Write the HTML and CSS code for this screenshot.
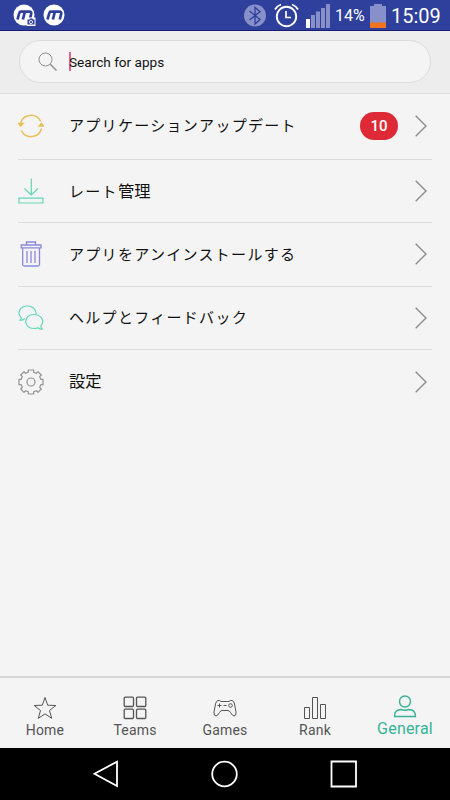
FILE: index.html
```html
<!DOCTYPE html>
<html lang="ja">
<head>
    <meta charset="UTF-8">
    <meta name="viewport" content="width=device-width, initial-scale=1.0">
    <title>General</title>
    <link rel="stylesheet" href="styles.css">
</head>
<body>
    <header class="status-bar">
        <svg class="logo" viewBox="0 0 23 23">
            <circle cx="11" cy="11" r="10.5" fill="#fff"/>
            <path d="M4.5 15.5 6.3 9Q6.6 7.7 8 7.7H16.5Q18.7 7.7 18.2 9.8L16.8 15.5M11.8 8 9.9 15.5" fill="none" stroke="#2e3f9c" stroke-width="2.7"/>
            <path d="M13.5 13.5H22.5V22H13.5z" fill="#fff"/>
            <path d="M14.5 15.5H16.5L17 14.5H19.5L20 15.5H21.5V20.5H14.5z" fill="#2e3f9c"/>
            <circle cx="18" cy="18" r="1.6" fill="none" stroke="#fff" stroke-width=".9"/>
        </svg>
        <svg class="logo" viewBox="0 0 23 23">
            <circle cx="11" cy="11" r="10.5" fill="#fff"/>
            <path d="M4.5 15.5 6.3 9Q6.6 7.7 8 7.7H16.5Q18.7 7.7 18.2 9.8L16.8 15.5M11.8 8 9.9 15.5" fill="none" stroke="#2e3f9c" stroke-width="2.7"/>
        </svg>
        <div class="status-right">
            <svg class="bluetooth" viewBox="0 0 22 23">
                <circle cx="11" cy="11.5" r="11" fill="#8790c8"/>
                <path d="M5.5 7 16 15.5 11 20V3.5L16 7.7 5.5 16" fill="none" stroke="#2e3f9c" stroke-width="1.3"/>
            </svg>
            <svg class="alarm" viewBox="0 0 25 25" fill="none" stroke="#fff">
                <circle cx="12.5" cy="13.5" r="9.7" stroke-width="1.9"/>
                <path d="M12 8V14.5H17" stroke-width="1.7"/>
                <path d="M1 6.5Q3 3 7 1.5M24 6.5Q22 3 18 1.5" stroke-width="1.8"/>
            </svg>
            <svg class="signal" viewBox="0 0 24 24" fill="#8790c8">
                <path d="M0 15H4V24H0z" fill="#fff"/>
                <path d="M5 11H9V24H5zM10 7.5H14V24H10zM15 4H19V24H15zM20 0H24V24H20z"/>
            </svg>
            <span class="percent">14%</span>
            <svg class="battery" viewBox="0 0 16 24">
                <path d="M0 2H4V0H12V2H16V19H0z" fill="#8790c8"/>
                <path d="M0 18.5H16V24H0z" fill="#f07320"/>
            </svg>
            <span class="clock">15:09</span>
        </div>
    </header>

    <div class="search-area">
        <div class="search-box">
            <svg class="search-icon" viewBox="0 0 20 20" fill="none" stroke="#929292">
                <circle cx="7.5" cy="7.5" r="6.5"/>
                <path d="M12.3 12.3 18.5 18.5" stroke-width="1.6"/>
            </svg>
            <span class="cursor"></span>
            <span class="placeholder">Search for apps</span>
        </div>
    </div>

    <main class="menu">
        <a class="row row-first">
            <svg class="row-icon yellow" viewBox="0 0 26 26">
                <path d="M2.5 10.5A10.8 10.8 0 0 1 22.7 8.5M23.5 15.5A10.8 10.8 0 0 1 3.3 17.5"/>
                <path d="M.8 10.5H5L2.6 13zM21.2 13 23.5 10.5 25.5 13z" fill="#e8c05c"/>
            </svg>
            <span class="label kana">アプリケーションアップデート</span>
            <span class="badge">10</span>
            <svg class="chevron" viewBox="0 0 12 22"><path d="M.7.7 11 11 .7 21.3"/></svg>
        </a>
        <a class="row">
            <svg class="row-icon green" viewBox="0 0 26 26">
                <path d="M13.3.5V17M6.5 10.5 13.3 17 20 10.5M1 20.2H25V25H1z"/>
            </svg>
            <span class="label"><span class="kana">レート</span>管理</span>
            <svg class="chevron" viewBox="0 0 12 22"><path d="M.7.7 11 11 .7 21.3"/></svg>
        </a>
        <a class="row">
            <svg class="row-icon purple" viewBox="0 0 26 26">
                <path d="M3.2 4H23V6.8H3.2zM8.5 4V1H17.5V4M4.7 6.8V23.5Q4.7 25 6.2 25H20Q21.5 25 21.5 23.5V6.8M9 10V22M13 10V22M17 10V22"/>
            </svg>
            <span class="label kana">アプリをアンインストールする</span>
            <svg class="chevron" viewBox="0 0 12 22"><path d="M.7.7 11 11 .7 21.3"/></svg>
        </a>
        <a class="row">
            <svg class="row-icon green" viewBox="0 0 26 26">
                <path d="M7 13.5Q4.5 15.5 2 15.2Q3.3 14 3 12.3C-1.5 7.5 2.5 1 9.5 1C14.5 1 18 4.5 18.3 9"/>
                <path d="M23 20.7C27.5 15.5 22.5 9.5 16 9.5C5 9.5 5 23.5 16 23.5Q18 23.5 20 22.7Q22 24.5 24.3 24.2Q22.8 22.5 23 20.7z"/>
            </svg>
            <span class="label kana">ヘルプとフィードバック</span>
            <svg class="chevron" viewBox="0 0 12 22"><path d="M.7.7 11 11 .7 21.3"/></svg>
        </a>
        <a class="row row-last">
            <svg class="row-icon gray" viewBox="0 0 26 26">
                <path d="M10.3 1H15.7V3.2L18.3 4.3 20 2.7 23.3 6 21.7 7.7 22.8 10.3H25V15.7H22.8L21.7 18.3 23.3 20 20 23.3 18.3 21.7 15.7 22.8V25H10.3V22.8L7.7 21.7 6 23.3 2.7 20 4.3 18.3 3.2 15.7H1V10.3H3.2L4.3 7.7 2.7 6 6 2.7 7.7 4.3 10.3 3.2z" stroke-linejoin="round"/>
                <circle cx="13" cy="13" r="4"/>
            </svg>
            <span class="label">設定</span>
            <svg class="chevron" viewBox="0 0 12 22"><path d="M.7.7 11 11 .7 21.3"/></svg>
        </a>
    </main>

    <nav class="tabs">
        <a class="tab">
            <svg viewBox="0 0 24 24"><path d="M12 1.5 14.7 9.2 22.8 9.5 16.5 14.5 18.7 22.3 12 17.9 5.3 22.3 7.5 14.5 1.2 9.5 9.3 9.2z"/></svg>
            <span>Home</span>
        </a>
        <a class="tab">
            <svg viewBox="0 0 24 24" stroke-width="1.3">
                <rect x="1.2" y="1.2" width="9.3" height="9.3" rx="1"/>
                <rect x="13.5" y="1.2" width="9.3" height="9.3" rx="1"/>
                <rect x="1.2" y="13.2" width="9.3" height="9.3" rx="1"/>
                <rect x="13.5" y="13.2" width="9.3" height="9.3" rx="1"/>
            </svg>
            <span>Teams</span>
        </a>
        <a class="tab">
            <svg viewBox="0 0 24 24">
                <path d="M8 5.5H16Q17 4 19 4.5Q21 5 21.5 8L23 16Q23.5 20 21 20Q19.5 20 17.5 16.500Q16.500 14.500 15 14.500H9Q7.500 14.500 6.500 16.500Q4.500 20 3 20Q.5 20 1 16L2.500 8Q3 5 5 4.500Q7 4 8 5.500z"/>
                <path d="M6.500 7.500V11.500M4.500 9.500H8.500M10.500 9.500H13.500"/>
                <circle cx="17.500" cy="9.500" r="1.800"/>
            </svg>
            <span>Games</span>
        </a>
        <a class="tab">
            <svg viewBox="0 0 24 24"><path d="M1.500 11.500H6.500V22.500H1.500zM9.500 1.500H14.500V22.500H9.500zM17.500 8.500H22.500V22.500H17.500z"/></svg>
            <span>Rank</span>
        </a>
        <a class="tab active">
            <svg viewBox="0 0 24 24">
                <circle cx="12" cy="6.500" r="5.500"/>
                <path d="M1.500 21.500Q1.500 14.500 8 14.500Q12 16 16 14.500Q22.500 14.500 22.500 21.500z"/>
            </svg>
            <span>General</span>
        </a>
    </nav>

    <footer class="nav-bar">
        <svg viewBox="0 0 28 28"><path d="M25 1.700V26L2.500 13.800z"/></svg>
        <svg viewBox="0 0 28 28"><circle cx="13.500" cy="14" r="12.300"/></svg>
        <svg viewBox="0 0 28 28"><path d="M1.500 1.500H26V26.500H1.500z"/></svg>
    </footer>
</body>
</html>
```

FILE: styles.css
```css
* {
    box-sizing: border-box;
}
body {
    margin: 0;
    width: 450px;
    height: 800px;
    display: flex;
    flex-direction: column;
    overflow: hidden;
    background-color: #f4f4f4;
    font-family: Roboto, "Noto Sans CJK JP", sans-serif;
    color: #111;
}
svg {
    display: block;
    flex: none;
}
.status-bar {
    height: 31px;
    display: flex;
    align-items: center;
    gap: 7px;
    padding: 1px 9px 0 13px;
    background-color: #2e3f9c;
    border-bottom: 1px solid #151c72;
    color: #fff;
}
.logo {
    width: 23px;
    height: 23px;
}
.status-right {
    display: flex;
    align-items: center;
    margin-left: auto;
}
.bluetooth {
    width: 22px;
    height: 23px;
}
.alarm {
    width: 25px;
    height: 25px;
    margin-left: 8px;
}
.signal {
    width: 24px;
    height: 24px;
    margin-left: 7px;
}
.percent {
    width: 30px;
    margin-left: 5px;
    font-size: 16px;
    white-space: nowrap;
}
.battery {
    width: 16px;
    height: 24px;
    margin-left: 5px;
}
.clock {
    width: 50px;
    margin-left: 5px;
    font-size: 20px;
}
.search-area {
    height: 63px;
    padding: 9px 19px 0;
    background-color: #ededed;
    border-bottom: 1px solid #dcdcdc;
}
.search-box {
    height: 43px;
    display: flex;
    align-items: center;
    padding-left: 18px;
    border: 1px solid #dcdcdc;
    border-radius: 22px;
    background-color: #f4f4f4;
}
.search-icon {
    width: 20px;
    height: 20px;
}
.cursor {
    width: 2px;
    height: 19px;
    margin-left: 11px;
    background-color: #e0668c;
}
.placeholder {
    margin-left: -2px;
    padding-top: 1px;
    font-size: 13.6px;
}
.menu {
    flex: 1;
    padding: 0 18px;
}
.row {
    height: 63.3px;
    display: flex;
    align-items: center;
    padding-right: 5px;
    border-bottom: 1px solid #dcdcdc;
}
.row-first {
    height: 66px;
    padding-bottom: 2px;
}
.row-last {
    border-bottom: 0;
}
.row-icon {
    width: 26px;
    height: 26px;
    fill: none;
}
.yellow {
    stroke: #e8c05c;
    stroke-width: 1.5;
}
.green {
    stroke: #62d8b5;
    stroke-width: 1.2;
}
.purple {
    stroke: #8b88d9;
    stroke-width: 1.3;
}
.gray {
    stroke: #929292;
    stroke-width: 1.2;
}
.label {
    margin-left: 25px;
    padding-top: 1px;
    font-size: 16.3px;
    line-height: 24px;
}
/* kana is set a little smaller than kanji, on the same pitch */
.kana {
    font-size: 15px;
    letter-spacing: 1.3px;
}
.badge {
    width: 38px;
    height: 28px;
    margin-left: auto;
    border-radius: 14px;
    background-color: #de2a36;
    color: #fff;
    font-size: 15px;
    font-weight: 500;
    line-height: 29px;
    text-align: center;
}
.chevron {
    width: 12px;
    height: 22px;
    margin-left: auto;
    fill: none;
    stroke: #8c8c8c;
    stroke-width: 1.4;
}
.badge + .chevron {
    margin-left: 17px;
}
.tabs {
    height: 72px;
    display: flex;
    border-top: 2px solid #d6d6d6;
}
.tab {
    flex: 1;
    display: flex;
    flex-direction: column;
    align-items: center;
    padding-top: 18px;
    color: #555;
    font-size: 14px;
    line-height: 20px;
    letter-spacing: .2px;
}
.tab svg {
    width: 24px;
    height: 24px;
    fill: none;
    stroke: #555;
}
.tab.active {
    padding-top: 17px;
    color: #37b397;
    font-size: 16px;
}
.tab.active svg {
    stroke: #37b397;
    stroke-width: 1.4;
}
.nav-bar {
    height: 52px;
    display: flex;
    justify-content: center;
    align-items: center;
    gap: 91px;
    background-color: #000;
}
.nav-bar svg {
    width: 28px;
    height: 28px;
    fill: none;
    stroke: #fff;
    stroke-width: 1.8;
}
```
